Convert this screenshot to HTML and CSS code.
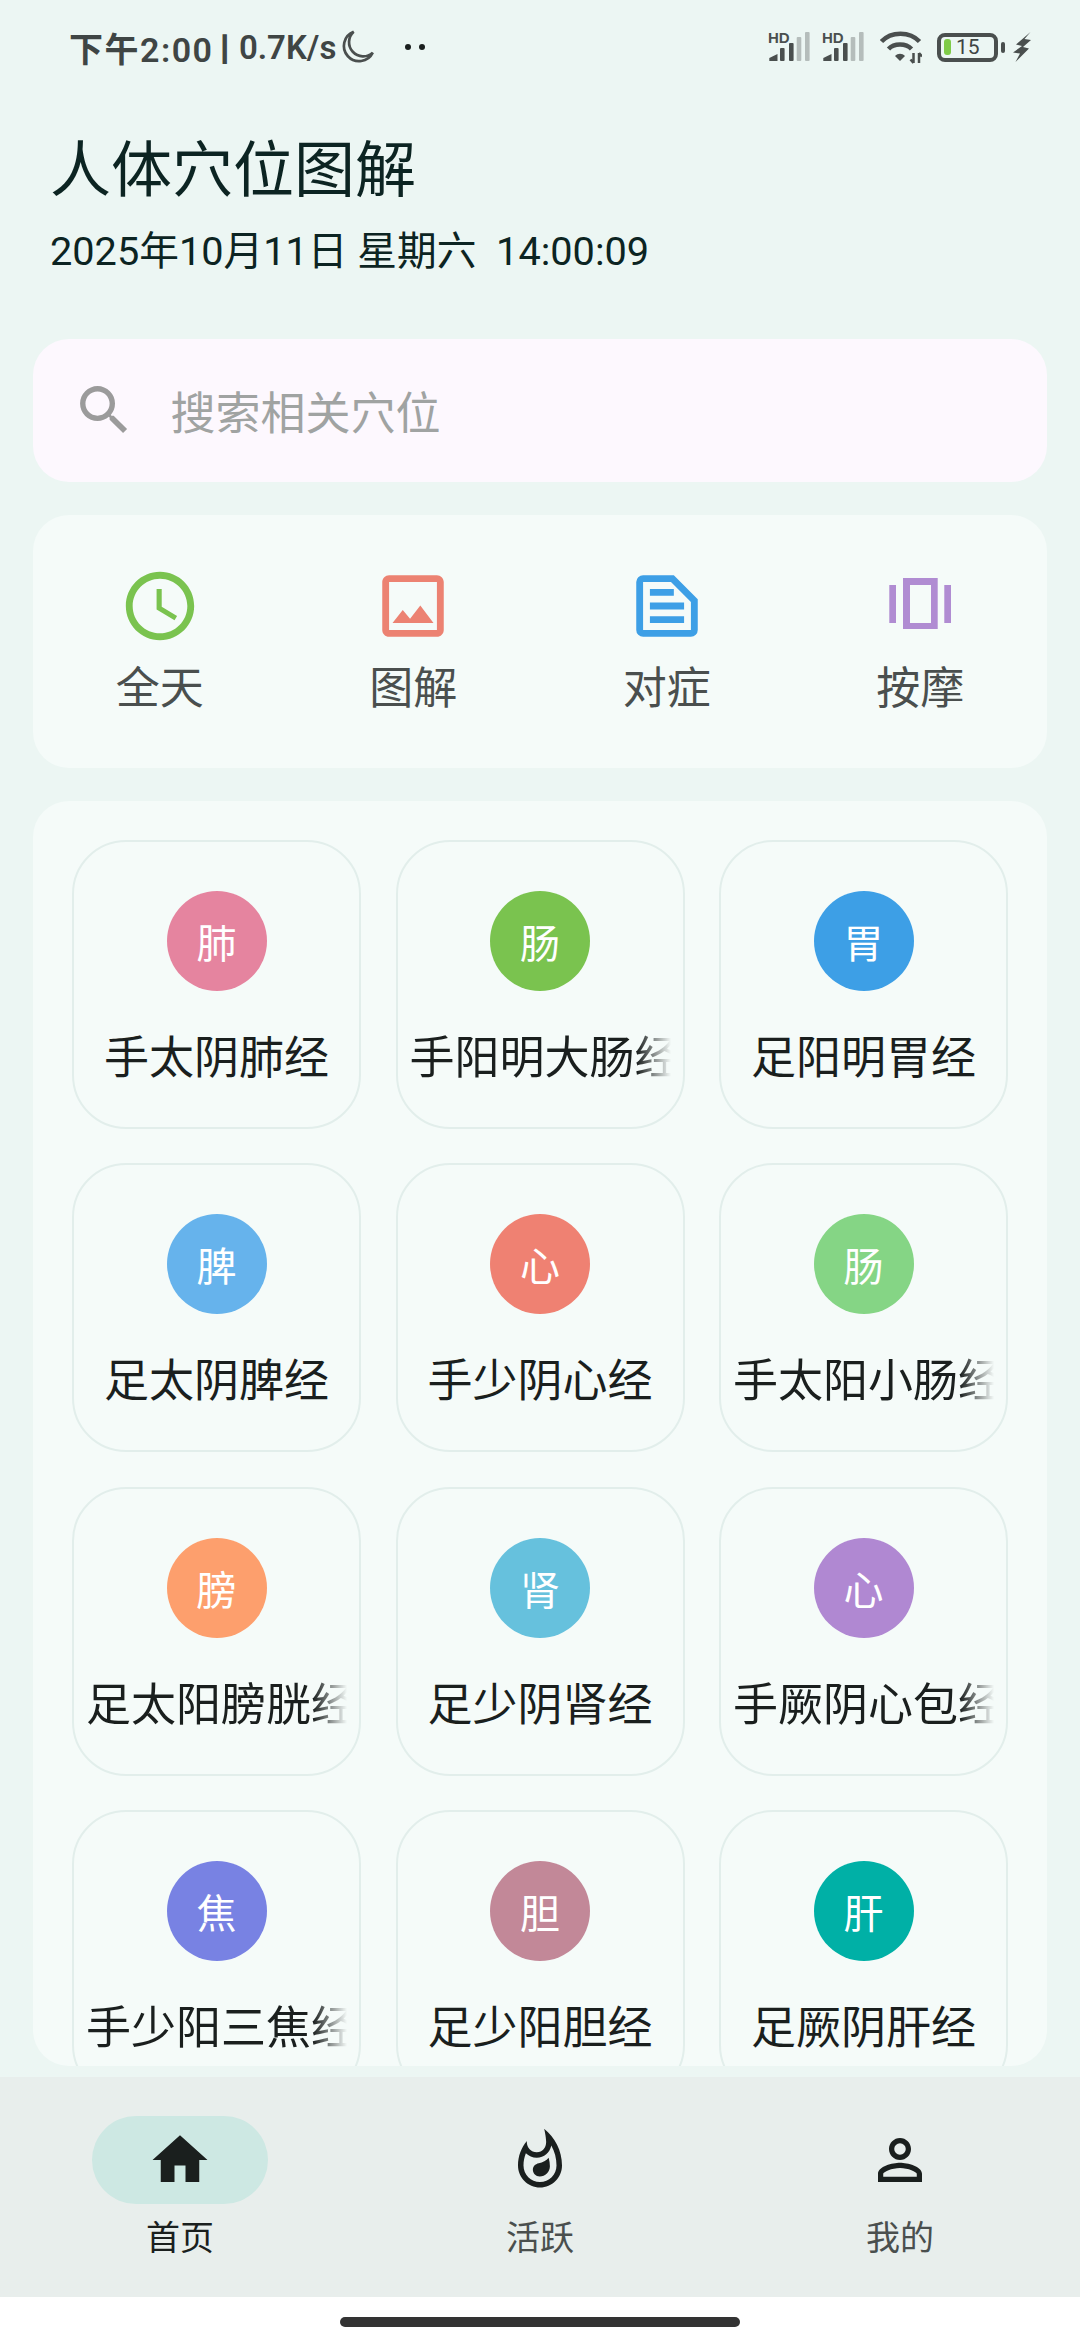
FILE: index.html
```html
<!DOCTYPE html>
<html lang="zh-CN">
<head>
<meta charset="utf-8">
<title>人体穴位图解</title>
<link rel="stylesheet" href="styles.css">
</head>
<body>
<div class="app">
  <div class="status">
    <div class="status-left">
      <span class="time">下午2:00</span><span class="sep">|</span><span class="speed">0.7K/s</span>
      <svg class="moon" viewBox="0 0 32 32"><path d="M13 2.500A13.500 13.500 0 1 0 30 21 12 12 0 0 1 13 2.500Z" fill="none" stroke="#4a4f4e" stroke-width="2.400"/></svg>
      <span class="dots"><i></i><i></i></span>
    </div>
    <div class="status-right">
      <svg class="sig" viewBox="0 0 42 32"><text x="0" y="12" class="hd">HD</text><path d="M1.300 30V27L9.500 23V30Z" fill="#4a4f4e"/><rect x="12" y="17" width="4.600" height="13" rx="1" fill="#4a4f4e"/><rect x="21" y="12" width="4.600" height="18" rx="1" fill="#4a4f4e"/><rect x="28.700" y="6" width="4.600" height="24" rx="1" fill="#b5bdbb"/><rect x="37" y="1" width="4.600" height="29" rx="1" fill="#b5bdbb"/></svg>
      <svg class="sig" viewBox="0 0 42 32"><text x="0" y="12" class="hd">HD</text><path d="M1.300 30V27L9.500 23V30Z" fill="#4a4f4e"/><rect x="12" y="17" width="4.600" height="13" rx="1" fill="#4a4f4e"/><rect x="21" y="12" width="4.600" height="18" rx="1" fill="#4a4f4e"/><rect x="28.700" y="6" width="4.600" height="24" rx="1" fill="#b5bdbb"/><rect x="37" y="1" width="4.600" height="29" rx="1" fill="#b5bdbb"/></svg>
      <svg class="wifi" viewBox="0 0 42 34"><g fill="none" stroke="#4a4f4e" stroke-width="4.500"><path d="M1.500 11.500C11 1 30 1 39.500 11.500"/><path d="M8.500 19C14 13 26 13 31.500 19"/></g><path d="M15 26C18 23 22 23 25 26L20 31Z" fill="#4a4f4e"/><path d="M33.500 23V33M30.500 29.500L33.500 33M39 33V23M39 23L42 26.500" stroke="#4a4f4e" stroke-width="2.500" fill="none"/></svg>
      <div class="battery"><span class="bat-body"><i class="bat-fill"></i><span class="bat-num">15</span></span><i class="bat-tip"></i></div>
      <svg class="bolt" viewBox="0 0 18 30"><path d="M17.500 0 3 12.500l6 1.500-9 6.500 7 1L2.500 30 16 16.500l-6-1.500 8-7-6.500-1Z" fill="#4a4f4e"/></svg>
    </div>
  </div>

  <header class="head">
    <h1 class="title">人体穴位图解</h1>
    <p class="date">2025年10月11日 星期六&nbsp;&nbsp;14:00:09</p>
  </header>

  <div class="search">
    <svg class="search-icon" viewBox="0 0 24 24"><path fill="#9b9b9b" d="M15.500 14h-.79l-.28-.27A6.470 6.470 0 0 0 16 9.500 6.500 6.500 0 1 0 9.500 16c1.610 0 3.090-.59 4.230-1.570l.27.28v.79l5 4.990L20.490 19l-4.990-5Zm-6 0C7.010 14 5 11.990 5 9.500S7.010 5 9.500 5 14 7.010 14 9.500 11.990 14 9.500 14Z"/></svg>
    <span class="search-text">搜索相关穴位</span>
  </div>

  <nav class="quick">
    <div class="quick-item">
      <svg class="quick-icon" viewBox="0 0 24 24"><path fill="#7ac34f" d="M11.990 2C6.470 2 2 6.480 2 12s4.470 10 9.990 10C17.520 22 22 17.520 22 12S17.520 2 11.990 2ZM12 20c-4.420 0-8-3.580-8-8s3.580-8 8-8 8 3.580 8 8-3.580 8-8 8Zm.5-13H11v6l5.250 3.150.75-1.230-4.500-2.670V7Z"/></svg>
      <span class="quick-label">全天</span>
    </div>
    <div class="quick-item">
      <svg class="quick-icon" viewBox="0 0 24 24"><path fill="#ec8272" d="M19 5v14H5V5h14m0-2H5c-1.100 0-2 .9-2 2v14c0 1.100.9 2 2 2h14c1.100 0 2-.9 2-2V5c0-1.100-.9-2-2-2Zm-4.860 8.860-3 3.870L9 13.140 6 17h12l-3.860-5.140Z"/></svg>
      <span class="quick-label">图解</span>
    </div>
    <div class="quick-item">
      <svg class="quick-icon" viewBox="0 0 24 24"><path fill="#3d9fe6" fill-rule="evenodd" d="M14 3H5a2 2 0 0 0-2 2v14a2 2 0 0 0 2 2h14a2 2 0 0 0 2-2v-9l-7-7ZM5 5h8.170L19 10.830V19H5V5Zm2 2h7v2H7V7Zm0 4h10v2H7v-2Zm0 4h10v2H7v-2Z"/></svg>
      <span class="quick-label">对症</span>
    </div>
    <div class="quick-item">
      <svg class="quick-icon" viewBox="0 0 82 82"><path fill="#b08cd2" fill-rule="evenodd" d="M10.300 20H17V58H10.300ZM65.300 20H72V58H65.300ZM24 13H58.700V64H24ZM31 20V58H52V20Z"/></svg>
      <span class="quick-label">按摩</span>
    </div>
  </nav>

  <section class="panel">
    <div class="grid">
      <div class="card"><span class="dot c1">肺</span><span class="name">手太阴肺经</span></div>
      <div class="card"><span class="dot c2">肠</span><span class="name fade">手阳明大肠经</span></div>
      <div class="card"><span class="dot c3">胃</span><span class="name">足阳明胃经</span></div>
      <div class="card"><span class="dot c4">脾</span><span class="name">足太阴脾经</span></div>
      <div class="card"><span class="dot c5">心</span><span class="name">手少阴心经</span></div>
      <div class="card"><span class="dot c6">肠</span><span class="name fade">手太阳小肠经</span></div>
      <div class="card"><span class="dot c7">膀</span><span class="name fade">足太阳膀胱经</span></div>
      <div class="card"><span class="dot c8">肾</span><span class="name">足少阴肾经</span></div>
      <div class="card"><span class="dot c9">心</span><span class="name fade">手厥阴心包经</span></div>
      <div class="card"><span class="dot c10">焦</span><span class="name fade">手少阳三焦经</span></div>
      <div class="card"><span class="dot c11">胆</span><span class="name">足少阳胆经</span></div>
      <div class="card"><span class="dot c12">肝</span><span class="name">足厥阴肝经</span></div>
    </div>
  </section>

  <nav class="tabs">
    <div class="tab">
      <span class="pill active"><svg class="tab-icon" viewBox="0 0 24 24"><path fill="#1a1f1e" d="M10 20v-6h4v6h5v-8h3L12 3 2 12h3v8h5Z"/></svg></span>
      <span class="tab-label on">首页</span>
    </div>
    <div class="tab">
      <span class="pill"><svg class="tab-icon" viewBox="0 0 24 24"><path fill="#1a1f1e" d="M11.570 13.160c-1.360.28-2.170 1.160-2.170 2.410 0 1.340 1.110 2.420 2.490 2.420 2.050 0 3.710-1.660 3.710-3.710 0-1.070-.15-2.120-.46-3.120-.79 1.070-2.200 1.720-3.570 2ZM13.500.67s.74 2.650.74 4.800c0 2.060-1.350 3.730-3.410 3.730-2.070 0-3.630-1.670-3.630-3.730l.03-.36C5.210 7.510 4 10.620 4 14c0 4.420 3.580 8 8 8s8-3.580 8-8C20 8.610 17.410 3.800 13.500.67ZM12 20c-3.310 0-6-2.690-6-6 0-1.530.3-3.040.86-4.430 1.010 1.010 2.410 1.630 3.970 1.630 2.660 0 4.750-1.830 5.280-4.430C17.340 8.970 18 11.440 18 14c0 3.310-2.690 6-6 6Z"/></svg></span>
      <span class="tab-label">活跃</span>
    </div>
    <div class="tab">
      <span class="pill"><svg class="tab-icon" viewBox="0 0 24 24"><path fill="#1a1f1e" d="M12 5.900a2.100 2.100 0 1 1 0 4.200 2.100 2.100 0 0 1 0-4.200m0 9c2.970 0 6.100 1.460 6.100 2.100v1.100H5.900V17c0-.64 3.130-2.100 6.100-2.100M12 4C9.790 4 8 5.790 8 8s1.790 4 4 4 4-1.790 4-4-1.790-4-4-4Zm0 9c-2.670 0-8 1.340-8 4v3h16v-3c0-2.660-5.330-4-8-4Z"/></svg></span>
      <span class="tab-label">我的</span>
    </div>
  </nav>
  <footer class="home-bar"><i class="indicator"></i></footer>
</div>
</body>
</html>
```
FILE: styles.css
```css
* { box-sizing: border-box; }
html, body { margin: 0; padding: 0; }
body { width: 1080px; height: 2340px; overflow: hidden; background: #ecf6f3; font-family: "Noto Sans CJK SC", "Noto Sans", sans-serif; }
.app { width: 1080px; height: 2340px; display: flex; flex-direction: column; }

.status { height: 94px; padding: 0 49px 0 69px; display: flex; align-items: center; justify-content: space-between; flex: none; }
.status-left { display: flex; align-items: center; }
.time { font: 600 34px "Roboto", "Noto Sans CJK SC", sans-serif; letter-spacing: 1.5px; color: #3f4544; white-space: nowrap; }
.sep { font: 700 33px "Roboto", sans-serif; -webkit-text-stroke: 1.5px #3f4544; color: #3f4544; margin: 0 10px 0 7px; }
.speed { font: 600 33px "Roboto", sans-serif; color: #3f4544; white-space: nowrap; }
.moon { width: 36px; height: 36px; margin-left: 3px; flex: none; }
.dots { display: flex; gap: 8px; margin-left: 30px; }
.dots i { width: 6px; height: 6px; border-radius: 50%; background: #1a1f1e; }
.status-right { display: flex; align-items: center; }
.sig { width: 42px; height: 32px; margin-right: 12px; overflow: visible; }
.hd { font: 700 15px "Liberation Sans", sans-serif; fill: #4a4f4e; }
.wifi { width: 42px; height: 34px; margin: 0 15px 0 4px; }
.battery { display: flex; align-items: center; }
.bat-body { width: 61px; height: 29px; border: 4px solid #4a4f4e; border-radius: 8px; display: flex; align-items: center; padding-left: 3px; }
.bat-fill { width: 7px; height: 16px; border-radius: 3px; background: #7fcb48; }
.bat-num { font: 400 21px "Roboto", sans-serif; color: #3f4544; margin-left: 5px; }
.bat-tip { width: 4px; height: 11px; border-radius: 2px; background: #4a4f4e; margin-left: 3px; }
.bolt { width: 18px; height: 30px; margin-left: 8px; }

.head { padding: 36px 50px 0; flex: none; height: 245px; }
.title { margin: 0; font-size: 61px; font-weight: 400; line-height: 72px; color: #0c2422; }
.date { margin: 24px 0 0; font: 400 39.7px/52px "Roboto", "Noto Sans CJK SC", sans-serif; color: #0c2422; white-space: nowrap; }

.search { margin: 0 33px; height: 143px; flex: none; border-radius: 36px; background: #fdf8fe; display: flex; align-items: center; padding-left: 39px; }
.search-icon { width: 64.5px; height: 64.5px; flex: none; }
.search-text { font-size: 45px; color: #a0a3a2; margin-left: 34px; }

.quick { margin: 33px 33px 0; height: 253px; flex: none; border-radius: 36px; background: #f5fbf9; display: grid; grid-template-columns: repeat(4, 1fr); padding-top: 50px; align-items: start; }
.quick-item { display: flex; flex-direction: column; align-items: center; }
.quick-icon { width: 82px; height: 82px; }
.quick-label { font-size: 44px; line-height: 58px; color: #4a4f4e; margin-top: 9px; }

.panel { margin: 33px 33px 0; height: 1265px; flex: none; border-radius: 36px; background: #f5fbf9; overflow: hidden; padding: 39px 39px 0; }
.grid { display: grid; grid-template-columns: repeat(3, 289px); grid-auto-rows: 289px; column-gap: 34.5px; row-gap: 34.4px; }
.card { border: 2px solid #e2eeeb; border-radius: 54px; display: flex; flex-direction: column; align-items: center; padding: 49px 12px 0; min-width: 0; }
.dot { width: 100px; height: 100px; flex: none; border-radius: 50%; display: flex; align-items: center; justify-content: center; color: #fff; font-size: 40px; }
.name { align-self: stretch; text-align: center; margin-top: 33px; font-size: 45px; line-height: 62px; color: #1a1f1e; white-space: nowrap; overflow: hidden; }
.fade { text-align: left; -webkit-mask-image: linear-gradient(to right, #000 87%, transparent 100%); mask-image: linear-gradient(to right, #000 87%, transparent 100%); }
.c1 { background: #e5849f; } .c2 { background: #7ac34f; } .c3 { background: #3d9fe6; }
.c4 { background: #66b3ec; } .c5 { background: #ef8172; } .c6 { background: #85d585; }
.c7 { background: #fd9f6d; } .c8 { background: #66c1dd; } .c9 { background: #b088d2; }
.c10 { background: #7882e3; } .c11 { background: #c28898; } .c12 { background: #00b0a6; }

.tabs { margin-top: 11px; height: 220px; flex: none; background: #e8eeec; display: grid; grid-template-columns: repeat(3, 1fr); }
.tab { display: flex; flex-direction: column; align-items: center; padding-top: 39px; }
.pill { width: 176px; height: 88px; border-radius: 44px; display: flex; align-items: center; justify-content: center; }
.active { background: #cde8e3; }
.tab-icon { width: 66px; height: 66px; }
.tab-label { font-size: 34px; line-height: 46px; color: #4a4f4e; margin-top: 9px; }
.on { color: #1a1f1e; }

.home-bar { flex: 1; background: #fff; display: flex; justify-content: center; padding-top: 20px; }
.indicator { width: 400px; height: 10px; border-radius: 5px; background: #333; }
```
